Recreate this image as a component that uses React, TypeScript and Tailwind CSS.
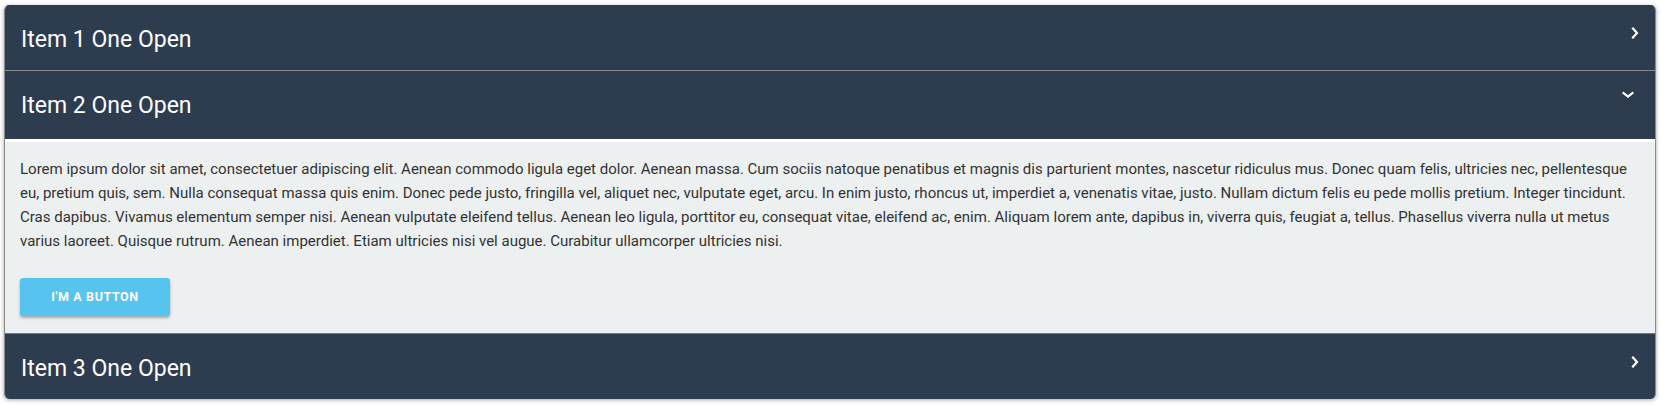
import React from "react";

const Chevron = ({ open }: { open: boolean }) => (
  <svg
    width="12"
    height="12"
    viewBox="0 0 12 12"
    className={open ? "mt-[-17px] mr-[3px]" : "mt-[-10px] mr-[-4px]"}
    fill="none"
    stroke="white"
    strokeWidth="2.2"
    strokeLinecap="square"
  >
    {open ? <path d="M1.5 4 L6 7.5 L10.5 4" /> : <path d="M4 1.5 L8 6 L4 10.5" />}
  </svg>
);

const Header = ({ title, open, extra }: { title: string; open: boolean; extra?: string }) => (
  <div className={`flex items-center justify-between bg-[#2e3c4f] pl-4 pr-[18px] ${extra ?? ""}`}>
    <span className="text-[23px] text-white leading-none pt-[3px]">{title}</span>
    <Chevron open={open} />
  </div>
);

export default function App() {
  return (
    <div className="bg-white pt-[5px] pl-[4px] pr-[7px] pb-[6px]" style={{ fontFamily: "Roboto, 'Noto Sans', sans-serif" }}>
      <div className="rounded-[5px] overflow-hidden shadow-[0_1px_4px_rgba(0,0,0,0.35)] border-x border-[#8a8a8a]">
        <Header title="Item 1 One Open" open={false} extra="h-[66px] border-b border-[#8a8a8a]" />
        <Header title="Item 2 One Open" open={true} extra="h-[68px] pb-[3px]" />
        <div className="border-t-[3px] border-white bg-[#ecf0f1] px-[15px] pt-[15px] pb-[17px] border-b border-b-[#777]">
          <p className="text-[15px] leading-[24px] text-[#333]">
            Lorem ipsum dolor sit amet, consectetuer adipiscing elit. Aenean commodo ligula eget dolor. Aenean massa. Cum sociis natoque penatibus et magnis dis parturient montes, nascetur ridiculus mus. Donec quam felis, ultricies nec, pellentesque eu, pretium quis, sem. Nulla consequat massa quis enim. Donec pede justo, fringilla vel, aliquet nec, vulputate eget, arcu. In enim justo, rhoncus ut, imperdiet a, venenatis vitae, justo. Nullam dictum felis eu pede mollis pretium. Integer tincidunt. Cras dapibus. Vivamus elementum semper nisi. Aenean vulputate eleifend tellus. Aenean leo ligula, porttitor eu, consequat vitae, eleifend ac, enim. Aliquam lorem ante, dapibus in, viverra quis, feugiat a, tellus. Phasellus viverra nulla ut metus varius laoreet. Quisque rutrum. Aenean imperdiet. Etiam ultricies nisi vel augue. Curabitur ullamcorper ultricies nisi.
          </p>
          <button className="mt-[25px] h-[38px] w-[150px] rounded-[3px] bg-[#56c4ef] text-white text-[12.5px] font-bold tracking-[0.6px] uppercase shadow-[0_2px_3px_rgba(0,0,0,0.3)]">
            I'm a button
          </button>
        </div>
        <Header title="Item 3 One Open" open={false} extra="h-[65px]" />
      </div>
    </div>
  );
}
